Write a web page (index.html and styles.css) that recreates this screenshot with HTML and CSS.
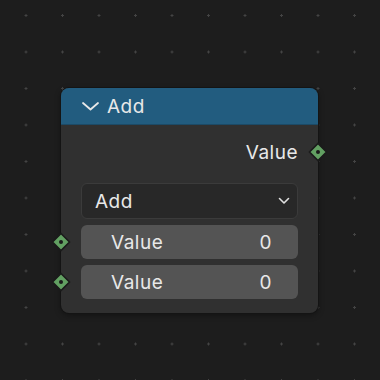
FILE: index.html
```html
<!DOCTYPE html>
<html lang="en">

<head>
    <meta charset="UTF-8">
    <title>Add Node</title>
    <link rel="stylesheet" href="styles.css">
</head>

<body>
    <div class="canvas">
        <div class="node">
            <div class="node-header">
                <svg class="chevron" width="19" height="10" viewBox="0 0 19 10">
                    <polyline points="2,2 9.5,8.5 17,2" fill="none" stroke="#e8e8e8" stroke-width="1.8" stroke-linecap="round" stroke-linejoin="round" />
                </svg>
                <span>Add</span>
            </div>
            <div class="node-body">
                <div class="row output">
                    <span>Value</span>
                    <svg class="socket socket-right" width="20" height="20" viewBox="0 0 20 20">
                        <polygon points="10,1.5 18.5,10 10,18.5 1.5,10" fill="#62a062" stroke="#1b1b1b" stroke-width="1.6" />
                        <circle cx="10" cy="10" r="2" fill="#1b1b1b" />
                    </svg>
                </div>

                <div class="dropdown">
                    <span>Add</span>
                    <svg width="12" height="8" viewBox="0 0 12 8">
                        <polyline points="1.5,1.5 6,6 10.5,1.5" fill="none" stroke="#e0e0e0" stroke-width="1.6" stroke-linecap="round" stroke-linejoin="round" />
                    </svg>
                </div>

                <div class="field">
                    <svg class="socket socket-left" width="20" height="20" viewBox="0 0 20 20">
                        <polygon points="10,1.5 18.5,10 10,18.5 1.5,10" fill="#62a062" stroke="#1b1b1b" stroke-width="1.6" />
                        <circle cx="10" cy="10" r="2" fill="#1b1b1b" />
                    </svg>
                    <span>Value</span>
                    <span>0</span>
                </div>
                <div class="field">
                    <svg class="socket socket-left" width="20" height="20" viewBox="0 0 20 20">
                        <polygon points="10,1.5 18.5,10 10,18.5 1.5,10" fill="#62a062" stroke="#1b1b1b" stroke-width="1.6" />
                        <circle cx="10" cy="10" r="2" fill="#1b1b1b" />
                    </svg>
                    <span>Value</span>
                    <span>0</span>
                </div>
            </div>
        </div>
    </div>
</body>

</html>
```

FILE: styles.css
```css
body {
    margin: 0;
    background-color: #1d1d1d;
    font-family: Inter, "Noto Sans", sans-serif;
    color: #e8e8e8;
}

.canvas {
    position: relative;
    width: 380px;
    height: 380px;
    background-image: radial-gradient(circle, #444 0, #444 1px, transparent 1.2px);
    background-size: 36.5px 36.5px;
    background-position: 7.75px -2.75px;
}

/* the node sits on the free canvas */
.node {
    position: absolute;
    left: 61px;
    top: 88px;
    width: 257px;
    height: 225px;
    background-color: #303030;
    border-radius: 8px;
    box-shadow: 0 0 0 1px #141414, 0 2px 6px rgba(0, 0, 0, 0.4);
    display: flex;
    flex-direction: column;
    font-size: 19px;
    letter-spacing: 0.5px;
}

.node-header {
    height: 37px;
    background-color: #225c7f;
    border-radius: 8px 8px 0 0;
    border-bottom: 1px solid #1c4a66;
    box-sizing: border-box;
    display: flex;
    align-items: center;
    gap: 7px;
    padding-left: 20px;
}

.node-body {
    padding: 15px 20px 0 20px;
    display: flex;
    flex-direction: column;
    gap: 6px;
}

.row {
    position: relative;
    height: 24px;
    display: flex;
    align-items: center;
}

.output {
    justify-content: flex-end;
    margin-bottom: 13px;
}

.socket {
    position: absolute;
    top: 50%;
    margin-top: -10px;
}

.socket-right {
    right: -30px;
}

.socket-left {
    left: -30px;
}

.dropdown {
    height: 36px;
    box-sizing: border-box;
    background-color: #282828;
    border: 1px solid #3b3b3b;
    border-radius: 6px;
    display: flex;
    align-items: center;
    justify-content: space-between;
    padding: 0 7px 0 13px;
}

.field {
    position: relative;
    height: 34px;
    background-color: #545454;
    border-radius: 6px;
    display: flex;
    align-items: center;
    justify-content: space-between;
    padding: 0 26px 0 30px;
}
```
